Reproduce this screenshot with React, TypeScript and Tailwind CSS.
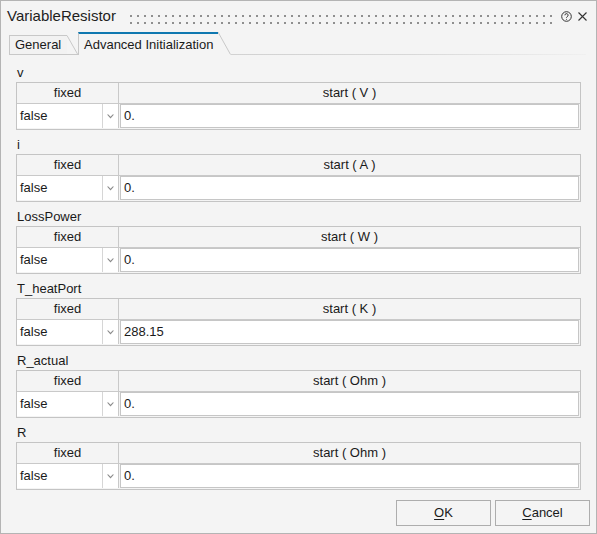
import React from "react";

type Row = { name: string; unit: string; value: string };

const rows: Row[] = [
  { name: "v", unit: "V", value: "0." },
  { name: "i", unit: "A", value: "0." },
  { name: "LossPower", unit: "W", value: "0." },
  { name: "T_heatPort", unit: "K", value: "288.15" },
  { name: "R_actual", unit: "Ohm", value: "0." },
  { name: "R", unit: "Ohm", value: "0." },
];

const font = { fontFamily: '"Segoe UI", "Liberation Sans", Arial, sans-serif' };

function Grip() {
  return (
    <svg className="h-[10px] flex-1 self-start mt-[14px]" shapeRendering="crispEdges">
      <defs>
        <pattern id="grip" width="7" height="7" patternUnits="userSpaceOnUse">
          <rect x="0" y="0" width="2" height="2" fill="#8f8f8f" />
        </pattern>
      </defs>
      <rect x="0" y="0" width="100%" height="10" fill="url(#grip)" />
    </svg>
  );
}

function HelpIcon() {
  return (
    <svg width="11" height="11" viewBox="0 0 11 11" fill="none" stroke="#333" strokeWidth="1">
      <circle cx="5.5" cy="5.5" r="4.8" />
      <path d="M3.9 4.3a1.6 1.6 0 1 1 2.3 1.4c-.5.3-.7.6-.7 1.1" />
      <circle cx="5.5" cy="8.2" r="0.5" fill="#333" stroke="none" />
    </svg>
  );
}

function CloseIcon() {
  return (
    <svg width="9" height="9" viewBox="0 0 9 9" stroke="#333" strokeWidth="1.1">
      <path d="M0.5 0.5 8.5 8.5M8.5 0.5 0.5 8.5" />
    </svg>
  );
}

function Chevron() {
  return (
    <svg width="7" height="5" viewBox="0 0 7 5" fill="#8a8a8a">
      <path d="M0 0.5 3.5 4.5 7 0.5 5.6 0.5 3.5 2.8 1.4 0.5Z" />
    </svg>
  );
}

function Section({ row }: { row: Row }) {
  return (
    <div className="flex flex-col">
      <div className="h-[18px] flex items-center pl-[1px] text-[13px] text-[#1a1a1a]">{row.name}</div>
      <div className="h-[48px] border border-[#c4c4c4] flex flex-col bg-[#f4f4f4]">
        <div className="h-[21px] flex border-b border-[#c9c9c9] text-[13px] text-[#1a1a1a]">
          <div className="w-[102px] border-r border-[#c9c9c9] flex items-center justify-center">fixed</div>
          <div className="flex-1 flex items-center justify-center">start ( {row.unit} )</div>
        </div>
        <div className="flex-1 flex text-[13px] text-[#1a1a1a] pb-[1px]">
          <div className="w-[102px] flex border-r border-[#c9c9c9] bg-white">
            <div className="flex-1 flex items-center pl-[3px] border-r border-[#d6d6d6]">false</div>
            <div className="w-[15px] flex items-center justify-center">
              <Chevron />
            </div>
          </div>
          <div className="flex-1 flex items-center pl-[3px] ml-[1px] mr-[1px] bg-white border border-[#c6c6c6]">
            {row.value}
          </div>
        </div>
      </div>
    </div>
  );
}

export default function App() {
  return (
    <div
      className="w-[597px] h-[534px] bg-[#f4f4f4] border border-[#b4b4b4] flex flex-col text-[#1a1a1a]"
      style={font}
    >
      {/* title bar */}
      <div className="h-[31px] flex items-center pl-[6px] pr-[9px]">
        <span className="text-[15px] text-[#1e1e1e] mr-[14px]">VariableResistor</span>
        <Grip />
        <div className="ml-[8px] flex items-center gap-[6px]">
          <HelpIcon />
          <CloseIcon />
        </div>
      </div>

      {/* tabs */}
      <div className="h-[23px] flex items-end pl-[8px] pr-[10px]">
        <div className="flex h-[20px] border-b border-[#c8c8c8]">
          <div className="w-[58px] border-l border-t border-[#c8c8c8] bg-[#f2f2f2] flex items-center pl-[5px] text-[13px]">
            General
          </div>
          <svg width="11" height="19" className="block">
            <path d="M0 0.5 10.5 19" stroke="#c8c8c8" fill="none" />
          </svg>
        </div>
        <div className="flex h-[23px]">
          <div className="w-[140px] border-l border-[#c8c8c8] border-t-2 border-t-[#0f78b0] flex items-center pl-[5px] text-[13px]">
            Advanced Initialization
          </div>
          <svg width="13" height="23" className="block">
            <path d="M0 0 12.5 22.5" stroke="#c8c8c8" fill="none" />
          </svg>
        </div>
        <div className="flex-1 h-[1px] bg-gradient-to-r from-[#d2d2d2] via-[#d8d8d8] to-[#f0f0f0]" />
      </div>

      {/* parameter tables */}
      <div className="flex flex-col gap-[6px] pl-[15px] pr-[15px] pt-[9px]">
        {rows.map((r) => (
          <Section key={r.name} row={r} />
        ))}
      </div>

      {/* buttons */}
      <div className="flex justify-end gap-[4px] pr-[6px] mt-auto mb-[7px]">
        <button className="w-[95px] h-[26px] border border-[#adadad] bg-[#f4f4f4] text-[13px]">
          <span className="underline underline-offset-2">O</span>K
        </button>
        <button className="w-[95px] h-[26px] border border-[#adadad] bg-[#f4f4f4] text-[13px]">
          <span className="underline underline-offset-2">C</span>ancel
        </button>
      </div>
    </div>
  );
}
